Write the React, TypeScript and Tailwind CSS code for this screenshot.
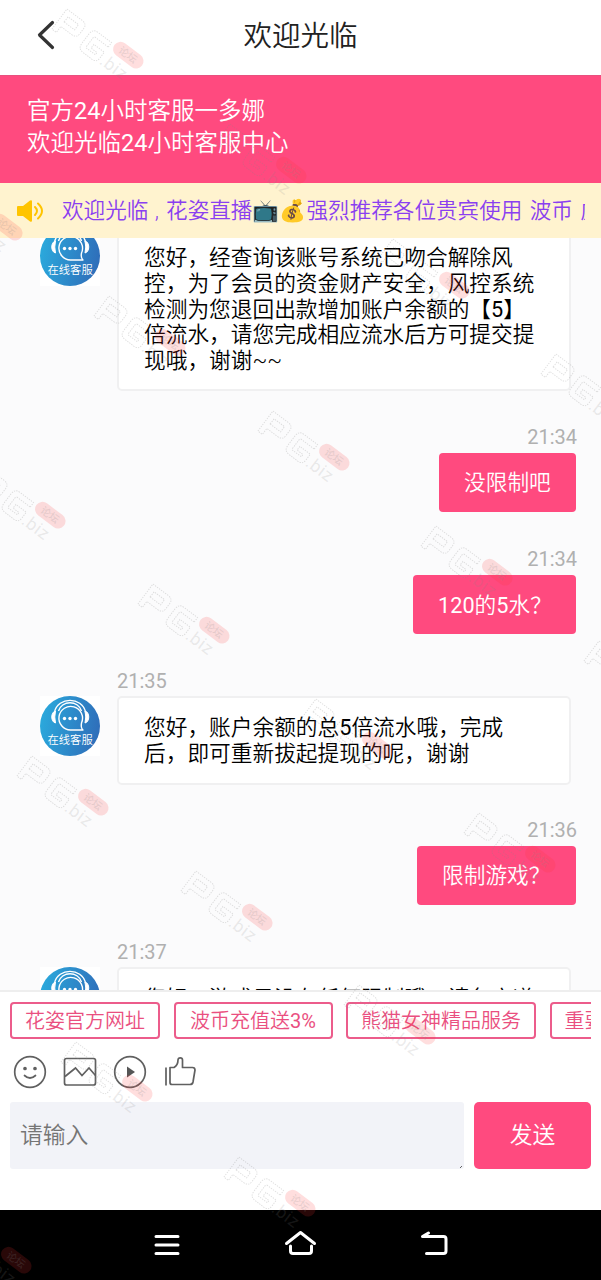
import React from "react";

const fontStack = "font-['Roboto','Noto_Sans_CJK_SC',sans-serif]";

const watermarks: [number, number][] = [
  [51, 8], [214, 123], [377, 238], [540, 353],
  [-70, 180], [93, 295], [257, 410], [420, 525], [583, 640],
  [-27, 468], [137, 583], [300, 698], [463, 812],
  [16, 755], [180, 870], [343, 984],
  [60, 1041], [223, 1156], [-61, 1213],
];

function Watermark({ x, y }: { x: number; y: number }) {
  return (
    <g transform={`translate(${x + 16} ${y + 1}) rotate(37) scale(0.93)`} fill="none" stroke="#888" strokeOpacity="0.27" strokeWidth="1">
      <g strokeDasharray="1.5 1.2">
        <path d="M0 27V0h20q7 0 7 6v7q0 6-7 6H6v8zM6 13V6h14v7z" />
        <path d="M60 6V0H42q-7 0-7 7v13q0 7 7 7h12q6 0 6-6v-8H46v5h8v3H42q-1 0-1-2V8q0-2 2-2z" />
      </g>
      <rect x="64" y="-8" width="37" height="16" rx="8" fill="#f33" fillOpacity="0.16" stroke="none" />
      <text x="71" y="4" fontSize="11" fontWeight="500" fill="#888" fillOpacity="0.2" stroke="none">论坛</text>
      <text x="62" y="26" fontSize="19" fontWeight="400" fill="#888" fillOpacity="0.17" stroke="none" letterSpacing="0.5">.biz</text>
    </g>
  );
}

function Avatar() {
  return (
    <svg viewBox="0 0 60 60" className="size-[60px] shrink-0 bg-white">
      <defs>
        <linearGradient id="avatarBlue" x1="0" y1="0.4" x2="1" y2="0.6">
          <stop offset="0" stopColor="#2ba9dc" />
          <stop offset="1" stopColor="#2f6db9" />
        </linearGradient>
      </defs>
      <circle cx="30" cy="30" r="30" fill="url(#avatarBlue)" />
      <g fill="none" stroke="#fff" strokeWidth="1.4">
        <path d="M14.500 16C18 0.500 42 0.500 45.500 16M18.500 15C22 4 38 4 41.500 15" />
        <path d="M30.500 34h12.500q-2.500-2-1.500-7a11.800 11.800 0 1 0-11 7z" strokeLinejoin="round" />
      </g>
      <path d="M15.500 15c-5 1-5 11 0 12q-1.500-6 0-12M45 15c5 1 5 11 0 12q1.500-6 0-12" fill="#fff" stroke="#fff" />
      <g fill="#fff">
        <circle cx="24.500" cy="22.500" r="1.700" />
        <circle cx="30" cy="22.500" r="1.700" />
        <circle cx="35.500" cy="22.500" r="1.700" />
        <text x="7.500" y="47.500" fontSize="11.300">在线客服</text>
      </g>
    </svg>
  );
}

/* Digits need a heavier cut than the Chinese glyphs to look even beside them. */
function Mixed({ text }: { text: string }) {
  return (
    <span>
      {text.split(/([0-9%]+)/).map((part, i) => (i % 2 ? <span key={i} className="font-normal">{part}</span> : part))}
    </span>
  );
}

function AgentMessage({ time, lines, className }: { time: string; lines: string[]; className: string }) {
  return (
    <div className={`flex shrink-0 pl-10 ${className}`}>
      <div className="pt-[26px]"><Avatar /></div>
      <div className="ml-[17px] w-[454px]">
        <div className="h-[26px] text-[20px] leading-[22px] font-normal text-[#b0b0b0]">{time}</div>
        <div className="rounded-[5px] border-2 border-[#f0f0f1] bg-white pt-[17.5px] pb-[15.5px] pl-[25px] text-[21.7px] leading-[25.8px] whitespace-nowrap text-black">
          {lines.map((line) => <div key={line}><Mixed text={line} /></div>)}
        </div>
      </div>
    </div>
  );
}

function UserMessage({ time, text, className, width }: { time: string; text: string; className: string; width: string }) {
  return (
    <div className={`flex shrink-0 flex-col items-end pr-[25px] ${className}`}>
      <div className="-mr-px h-[27px] text-[20px] leading-[22px] font-normal text-[#b0b0b0]">{time}</div>
      <div className={`flex h-[59px] items-center rounded bg-[#ff4a7f] pt-0.5 pl-[25px] text-[21.7px] whitespace-nowrap text-white ${width}`}><Mixed text={text} /></div>
    </div>
  );
}

function Chip({ text, width }: { text: string; width: string }) {
  return (
    <div className={`flex h-[37px] shrink-0 items-center justify-center rounded border-2 border-[#ec5c8b] text-[20px] whitespace-nowrap text-[#ea4f80] ${width}`}><Mixed text={text} /></div>
  );
}

export default function App() {
  return (
    <div className={`relative flex h-[1280px] w-[601px] flex-col overflow-hidden bg-white font-[350] ${fontStack}`}>
      <header className="relative flex h-[75px] shrink-0 items-center justify-center">
        <svg viewBox="0 0 20 32" className="absolute top-[19px] left-9 h-8 w-5" fill="none" stroke="#333" strokeWidth="3.2" strokeLinecap="round" strokeLinejoin="round">
          <path d="M16.500 3.500L3.500 16l13 12.500" />
        </svg>
        <h1 className="text-[28.5px] leading-none text-[#222]">欢迎光临</h1>
      </header>

      <section className="h-[108px] shrink-0 border-t border-[#e8507e] bg-[#ff4a7f] pt-[19px] pl-[27px] text-[23.5px] leading-8 text-white">
        <div><Mixed text="官方24小时客服一多娜" /></div>
        <div><Mixed text="欢迎光临24小时客服中心" /></div>
      </section>

      <div className="flex h-[55px] shrink-0 items-center bg-[#fff3cf] pr-4 pl-4">
        <svg viewBox="0 0 28 24" className="h-6 w-7 shrink-0" fill="#ffc400">
          <path d="M1 8Q1 7 2 7h5l7-5.500q2-1 2 1v19q0 2-2 1L7 17H2Q1 17 1 16z" />
          <path d="M19 8q4 4 0 8M22 4.500q8 7.500 0 15" fill="none" stroke="#ffc400" strokeWidth="2" strokeLinecap="round" />
        </svg>
        <div className="ml-[18px] flex-1 overflow-hidden text-[21.6px] leading-[30px] whitespace-nowrap text-[#8a3ff0]">
          欢迎光临<span className="tracking-[1px]"> , </span>花姿直播📺💰强烈推荐各位贵宾使用<span className="tracking-[2px]"> </span>波币<span className="tracking-[2px]"> </span>虚拟币
        </div>
      </div>

      <main className="flex h-[752px] shrink-0 flex-col overflow-hidden bg-[#fbfbfc]">
        <AgentMessage className="-mt-[38.5px]" time="21:33" lines={["您好，经查询该账号系统已吻合解除风", "控，为了会员的资金财产安全，风控系统", "检测为您退回出款增加账户余额的【5】", "倍流水，请您完成相应流水后方可提交提", "现哦，谢谢~~"]} />
        <UserMessage className="mt-[34.5px]" time="21:34" text="没限制吧" width="w-[137px]" />
        <UserMessage className="mt-[36.5px]" time="21:34" text="120的5水？" width="w-[163px]" />
        <AgentMessage className="mt-[35.5px]" time="21:35" lines={["您好，账户余额的总5倍流水哦，完成", "后，即可重新拔起提现的呢，谢谢"]} />
        <UserMessage className="mt-[34px]" time="21:36" text="限制游戏？" width="w-[159px]" />
        <AgentMessage className="mt-[36px]" time="21:37" lines={["您好，游戏是没有任何限制哦，请各方遵", "守规则"]} />
      </main>

      <footer className="h-[220px] shrink-0 border-t-2 border-[#eee] bg-white px-[10px] pt-[10px]">
        <div className="flex gap-[13.5px] overflow-hidden">
          <Chip text="花姿官方网址" width="w-[150px]" />
          <Chip text="波币充值送3%" width="w-[159px]" />
          <Chip text="熊猫女神精品服务" width="w-[190px]" />
          <Chip text="重要公告通知" width="w-[150px]" />
        </div>
        <div className="mt-4 flex h-[34px] gap-4 pl-[3px]">
          <svg viewBox="0 0 34 34" className="size-[34px]" fill="none" stroke="#606060" strokeWidth="1.7" strokeLinecap="round">
            <circle cx="17" cy="17" r="15.300" />
            <path d="M11.500 20.500q5.500 5 11 0" />
            <circle cx="12" cy="13.500" r="1" fill="#606060" /><circle cx="22" cy="13.500" r="1" fill="#606060" />
          </svg>
          <svg viewBox="0 0 34 34" className="size-[34px]" fill="none" stroke="#606060" strokeWidth="1.700">
            <rect x="1.500" y="3.500" width="31" height="26.500" rx="2" />
            <path d="M2 21.500L12.500 13l6.500 7.500 7-7.500 6.500 7.500" />
          </svg>
          <svg viewBox="0 0 34 34" className="size-[34px]" fill="none" stroke="#606060" strokeWidth="1.700">
            <circle cx="17" cy="17" r="15.300" />
            <path d="M14 11.500v11l8-5.500z" fill="#555" stroke="none" />
          </svg>
          <svg viewBox="0 0 34 34" className="size-[34px]" fill="none" stroke="#606060" strokeWidth="1.700" strokeLinejoin="round">
            <path d="M3 12.500v18M7 13v14.500q0 2 2 2h18q2.500 0 3-2.500l2-12q0-2.500-2.500-2.500H19.500V5q0-2.200-2.200-2.200T15 5q0 5-4 7.500H7z" />
          </svg>
        </div>
        <div className="mt-[13px] flex h-[67px] gap-[10px]">
          <div className="flex w-[454px] items-center justify-between rounded-[3px] bg-[#f2f3f8] pt-0.5 pl-[10px] text-[22.8px] text-[#757575]">
            <span>请输入</span>
            <svg viewBox="0 0 5 5" className="size-[5px] self-end" stroke="#666"><path d="M1 4l2-2" /></svg>
          </div>
          <button className="w-[117px] rounded-[5px] bg-[#ff4a7f] pt-0.5 text-[22.8px] text-white">发送</button>
        </div>
      </footer>

      <nav className="h-[70px] shrink-0 bg-black">
        <svg viewBox="0 0 601 70" className="h-[70px] w-[601px]" fill="none" stroke="#fff" strokeWidth="3" strokeLinecap="round" strokeLinejoin="round">
          <path d="M156 26.500h22M156 35h22M156 43.500h22" />
          <path d="M286.500 33.500l14-11 14 11M290.500 36v5q0 2.500 2.500 2.500h16q2.500 0 2.500-2.500v-5" />
          <path d="M422.500 26.500h21q2.500 0 2.500 2.500v12q0 2.500-2.500 2.500h-17M422.500 26.500l6-3.500" />
        </svg>
      </nav>

      <svg viewBox="0 0 601 1280" className="pointer-events-none absolute inset-0 h-[1280px] w-[601px]">
        {watermarks.map(([x, y]) => <Watermark key={`${x}-${y}`} x={x} y={y} />)}
      </svg>
    </div>
  );
}
